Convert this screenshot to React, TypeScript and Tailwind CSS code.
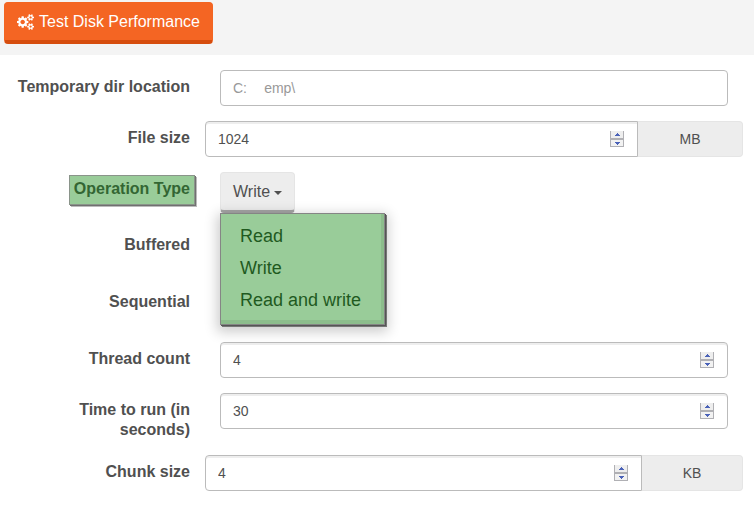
import React, { useState } from "react";

function CogsIcon() {
  return (
    <svg viewBox="0 0 1920 1792" className="h-4 w-[17px] shrink-0" fill="currentColor" aria-hidden="true">
      <path d="M896 896q0-106-75-181t-181-75-181 75-75 181 75 181 181 75 181-75 75-181zm768 512q0-52-38-90t-90-38-90 38-38 90q0 53 37.5 90.5t90.5 37.5 90.5-37.5 37.5-90.5zm0-1024q0-52-38-90t-90-38-90 38-38 90q0 53 37.5 90.5t90.5 37.5 90.5-37.5 37.5-90.5zm-384 421v185q0 10-7 19.5t-16 10.5l-155 24q-11 35-32 76 34 48 90 115 7 11 7 20 0 12-7 19-23 30-82.5 89.5t-78.5 59.5q-11 0-21-7l-115-90q-37 19-77 31-11 108-23 155-7 24-30 24h-186q-11 0-20-7.5t-10-17.5l-23-153q-34-10-75-31l-118 89q-7 7-20 7-11 0-21-8-144-133-144-160 0-9 7-19 10-14 41-53t47-61q-23-44-35-82l-152-24q-10-1-17-9.5t-7-19.5v-185q0-10 7-19.5t16-10.5l155-24q11-35 32-76-34-48-90-115-7-11-7-20 0-12 7-20 22-30 82-89t79-59q11 0 21 7l115 90q34-18 77-32 11-108 23-154 7-24 30-24h186q11 0 20 7.5t10 17.5l23 153q34 10 75 31l118-89q8-7 20-7 11 0 21 8 144 133 144 160 0 8-7 19-12 16-42 54t-45 60q23 48 34 82l152 23q10 2 17 10.5t7 19.5zm640 533v140q0 16-149 31-12 27-30 52 51 113 51 138 0 4-4 7-122 71-124 71-8 0-46-47t-52-68q-20 2-30 2t-30-2q-14 21-52 68t-46 47q-2 0-124-71-4-3-4-7 0-25 51-138-18-25-30-52-149-15-149-31v-140q0-16 149-31 13-29 30-52-51-113-51-138 0-4 4-7 4-2 35-20t59-34 30-16q8 0 46 46.5t52 67.5q20-2 30-2t30 2q51-71 92-112l6-2q4 0 124 70 4 3 4 7 0 25-51 138 17 23 30 52 149 15 149 31zm0-1024v140q0 16-149 31-12 27-30 52 51 113 51 138 0 4-4 7-122 71-124 71-8 0-46-47t-52-68q-20 2-30 2t-30-2q-14 21-52 68t-46 47q-2 0-124-71-4-3-4-7 0-25 51-138-18-25-30-52-149-15-149-31v-140q0-16 149-31 13-29 30-52-51-113-51-138 0-4 4-7 4-2 35-20t59-34 30-16q8 0 46 46.5t52 67.5q20-2 30-2t30 2q51-71 92-112l6-2q4 0 124 70 4 3 4 7 0 25-51 138 17 23 30 52 149 15 149 31z" />
    </svg>
  );
}

function Row({ label, htmlFor, children }: { label: string; htmlFor?: string; children?: React.ReactNode }) {
  return (
    <div className="grid grid-cols-[205px_1fr] items-start">
      <label htmlFor={htmlFor} className="pt-[7px] pr-[15px] pl-4 text-right font-bold leading-5">
        {label}
      </label>
      {children}
    </div>
  );
}

function NumberField({ id, initial, unit, unitClass }: { id: string; initial: number; unit?: string; unitClass?: string }) {
  const [value, setValue] = useState(initial);
  return (
    <div className={unit ? "flex h-9" : "flex h-9 px-[15px]"}>
      <div
        className={
          "flex min-w-0 flex-1 items-center border border-[#bbb] bg-white pr-[13px] shadow-[inset_0_2px_0_#eee] " +
          (unit ? "rounded-l" : "rounded")
        }
      >
        <input
          id={id}
          type="number"
          value={value}
          onChange={(e) => setValue(Number(e.target.value))}
          className="h-full min-w-0 flex-1 appearance-none bg-transparent pl-3 text-sm outline-none [-moz-appearance:textfield] [&::-webkit-inner-spin-button]:appearance-none"
        />
        <div className="flex h-4 w-[14px] flex-col">
          <button
            type="button"
            aria-label="Increase"
            onClick={() => setValue(value + 1)}
            className="flex h-2 justify-center border-x border-b border-[#b0b0b4] bg-[#eee] pt-[2px]"
          >
            <svg viewBox="0 0 5 3" className="h-[3px] w-[5px] shrink-0" fill="#4a62b8">
              <path d="M2 0h1v1h1v1h1v1H0V2h1V1h1z" />
            </svg>
          </button>
          <button
            type="button"
            aria-label="Decrease"
            onClick={() => setValue(value - 1)}
            className="flex h-2 justify-center border border-[#b0b0b4] bg-[#f2f2f2] pt-[2px]"
          >
            <svg viewBox="0 0 5 3" className="h-[3px] w-[5px] shrink-0" fill="#4a62b8">
              <path d="M0 0h5v1H4v1H3v1H2V2H1V1H0z" />
            </svg>
          </button>
        </div>
      </div>
      {unit && (
        <span
          className={
            "flex items-center justify-center rounded-r border border-l-0 border-[#e5e5e5] bg-[#ededed] text-sm " + unitClass
          }
        >
          {unit}
        </span>
      )}
    </div>
  );
}

export default function App() {
  const [operation, setOperation] = useState("Write");
  return (
    <div className="bg-white font-['Liberation_Sans',Arial,sans-serif] text-base text-[#505050]">
      <header className="flex h-[55px] items-start bg-[#f4f4f4] px-1 pt-[2px]">
        <button
          type="button"
          className="flex h-[42px] items-center gap-[5px] rounded border border-b-4 border-[#f26522] border-b-[#d64d0e] bg-[#f46523] px-3 text-white"
        >
          <CogsIcon />
          Test Disk Performance
        </button>
      </header>

      <form className="flex flex-col gap-[15px] pt-[15px] pr-[11px] pb-[22px]">
        <Row label="Temporary dir location" htmlFor="dir">
          <div className="flex h-9 px-[15px]">
            <input
              id="dir"
              type="text"
              placeholder={"C:\temp\\"}
              className="min-w-0 flex-1 rounded border border-[#bbb] px-3 text-sm outline-none placeholder:text-[#999]"
            />
          </div>
        </Row>
        <Row label="File size" htmlFor="size">
          <NumberField id="size" initial={1024} unit="MB" unitClass="w-[105px]" />
        </Row>

        <div className="grid grid-cols-[205px_1fr] items-start">
          <div className="flex justify-end pt-[3px] pr-[10px]">
            <label
              htmlFor="operation"
              className="border border-[#8a948a] bg-[#99cc99] px-1 pt-[3px] pb-[5px] font-bold leading-5 text-[#336633] shadow-[1px_1px_0_#707070,2px_2px_0_#bbb]"
            >
              Operation Type
            </label>
          </div>
          <div className="px-[15px]">
            <div className="relative w-fit">
              <button
                id="operation"
                type="button"
                aria-haspopup="menu"
                className="flex h-[41px] items-center gap-1 rounded border border-b-[3px] border-[#e5e5e5] border-b-[#a5a5a5] bg-[#ededed] px-3"
              >
                {operation}
                <span className="mt-[3px] border-x-4 border-t-4 border-x-transparent border-t-[#505050]" />
              </button>
              <ul
                role="menu"
                className="absolute top-full left-0 w-[165px] border border-[#858585] bg-[#99cc99] pt-[6px] pb-2 text-lg leading-[26px] text-[#1f5a1f] shadow-[inset_-3px_-4px_0_#8cbd8c,1px_1px_0_#555,2px_2px_0_#777,0_4px_12px_3px_rgba(0,0,0,0.2)]"
              >
                {["Read", "Write", "Read and write"].map((item) => (
                  <li key={item} role="none">
                    <button
                      type="button"
                      role="menuitem"
                      onClick={() => setOperation(item)}
                      className="w-full px-[19px] py-[3px] text-left whitespace-nowrap"
                    >
                      {item}
                    </button>
                  </li>
                ))}
              </ul>
            </div>
          </div>
        </div>

        <div className="flex flex-col gap-[30px] pb-[15px]">
          <Row label="Buffered" />
          <Row label="Sequential" />
        </div>

        <Row label="Thread count" htmlFor="threads">
          <NumberField id="threads" initial={4} />
        </Row>
        <Row label="Time to run (in seconds)" htmlFor="time">
          <NumberField id="time" initial={30} />
        </Row>
        <Row label="Chunk size" htmlFor="chunk">
          <NumberField id="chunk" initial={4} unit="KB" unitClass="w-[101px]" />
        </Row>
      </form>
    </div>
  );
}
